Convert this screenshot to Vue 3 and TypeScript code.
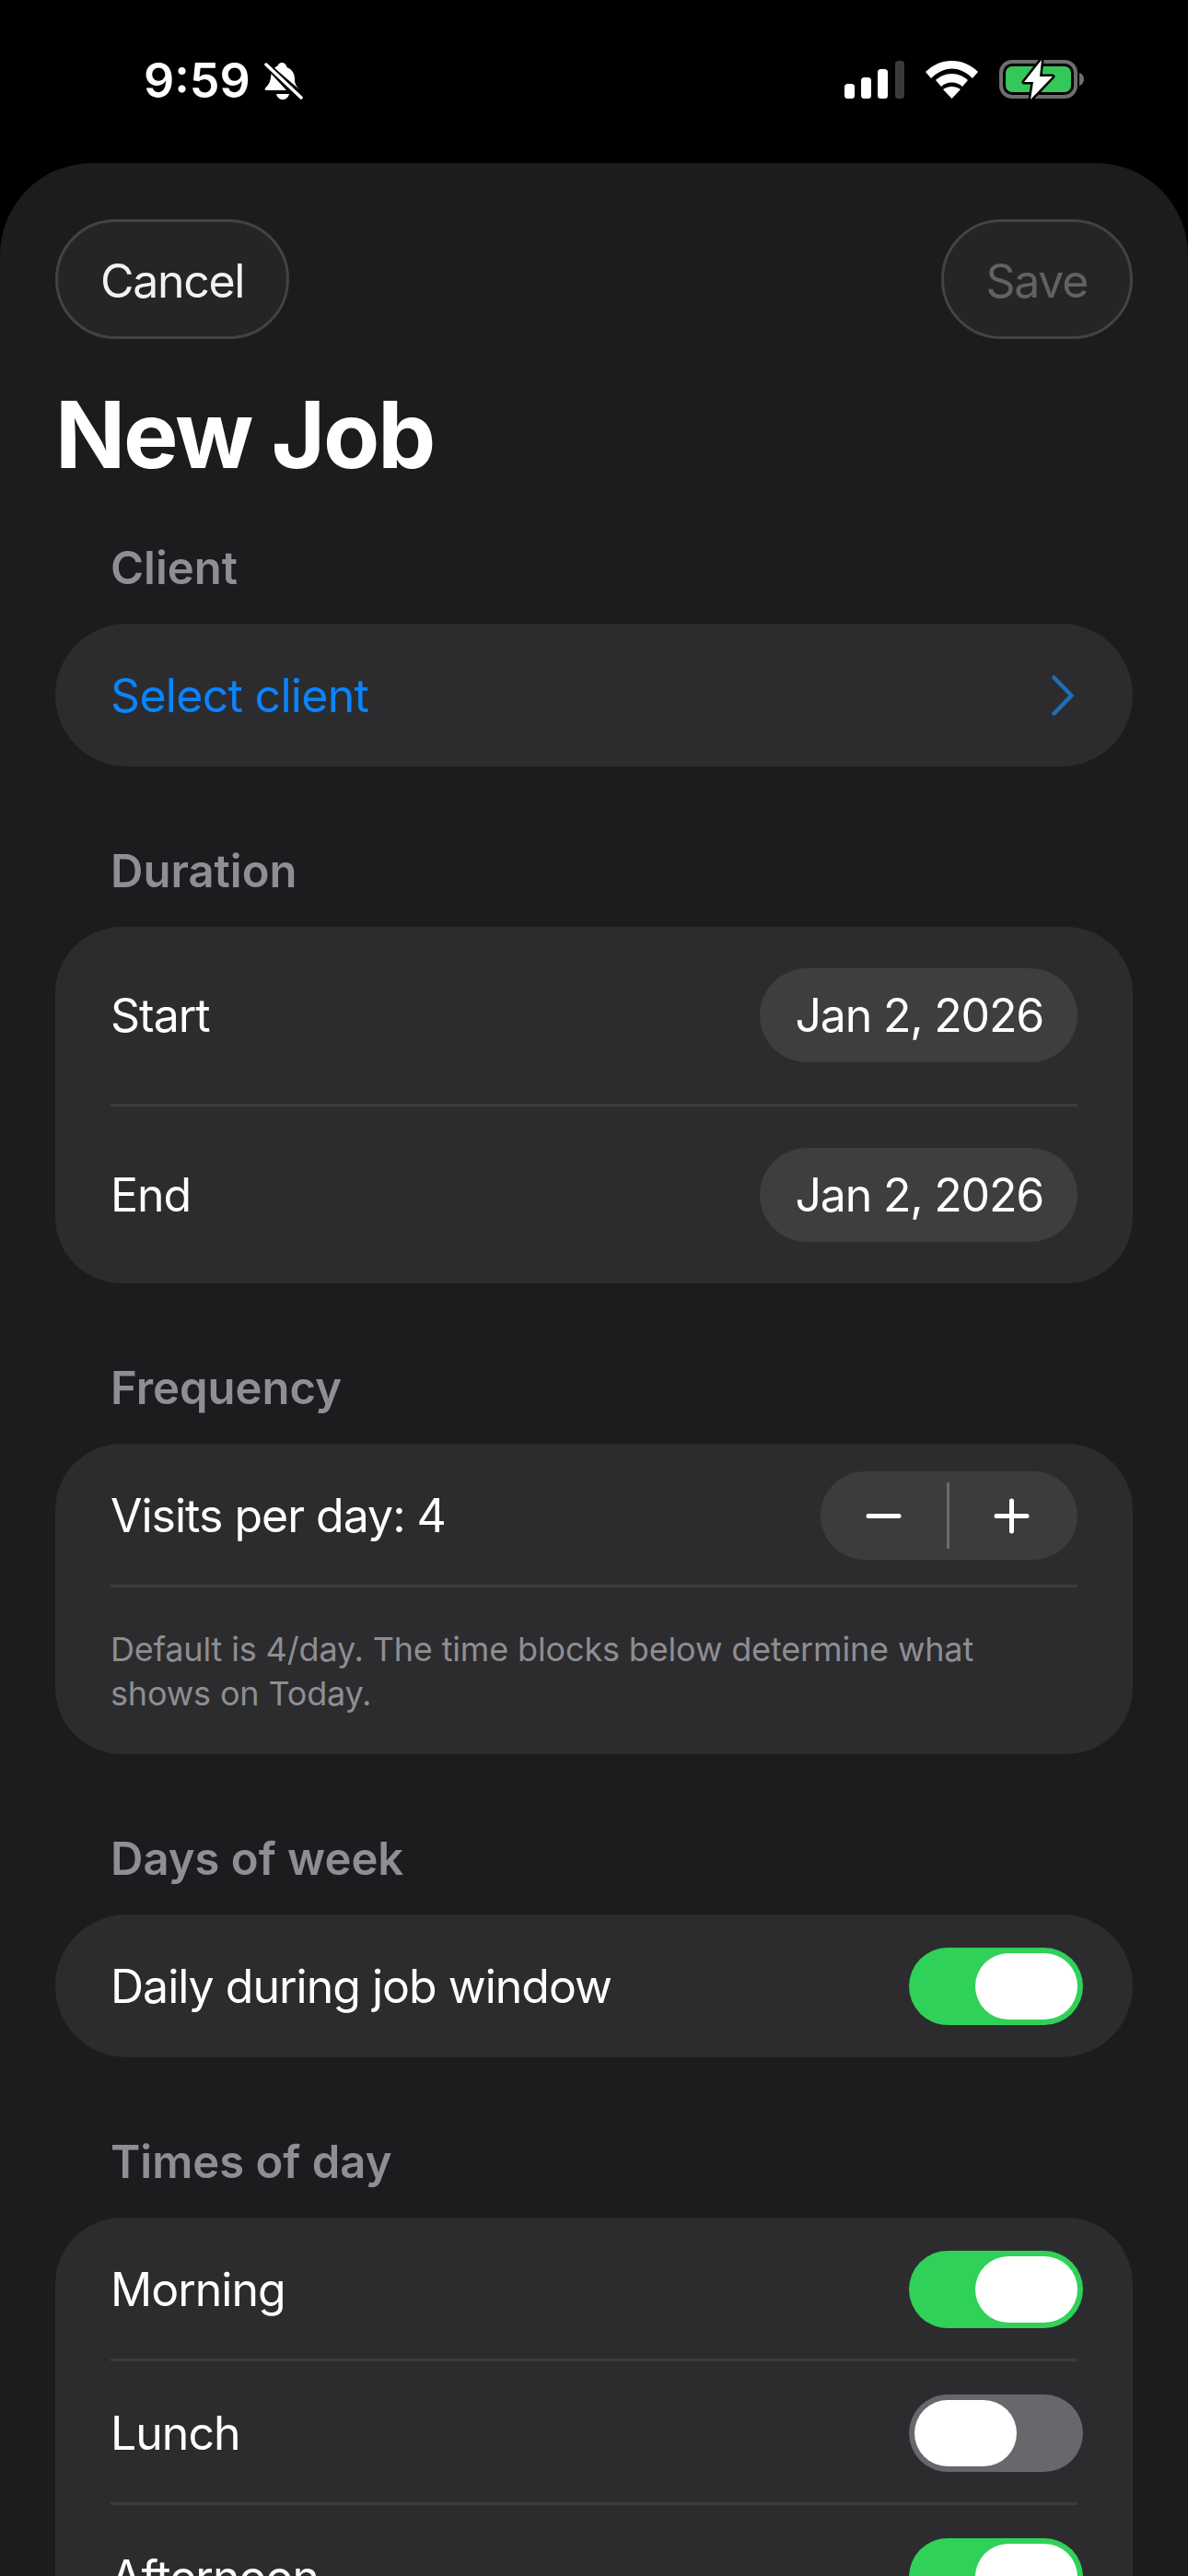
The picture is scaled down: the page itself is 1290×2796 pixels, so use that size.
<script setup lang="ts">
import { ref } from 'vue'

const visits = ref(4)
const daily = ref(true)

const times = ref([
  { name: 'Morning', on: true },
  { name: 'Lunch', on: false },
  { name: 'Afternoon', on: true }
])
</script>

<template>
  <div class="screen">
    <div class="status-bar">
      <div class="status-left">
        <span class="clock">9:59</span>
        <svg width="42" height="44" viewBox="0 0 42 44">
          <path fill="#fff" d="M19 2C22 2 24 4 24.500 7C30 9 33 14 33 20C33 24 34 27 38 31L11 8C13 6 13.500 6 14.500 5.500C15 3.500 17 2 19 2Z"/>
          <path fill="#fff" d="M7.500 14L24 32H2C.5 32 0 30 1.500 29C5 26 7 22 7.500 14Z"/>
          <path fill="#fff" d="M13 36H27C26 40 23 42 20 42S14 40 13 36Z"/>
          <path stroke="#000" stroke-width="7" d="M1 3L41 41"/>
          <path stroke="#fff" stroke-width="3.500" stroke-linecap="round" d="M2 4L40 40"/>
        </svg>
      </div>
      <div class="status-right">
        <svg width="65" height="44" viewBox="0 0 65 44">
          <rect x="0" y="27" width="11" height="16" rx="3.500" fill="#fff"/>
          <rect x="18" y="20" width="11" height="23" rx="3.500" fill="#fff"/>
          <rect x="36" y="11" width="11" height="32" rx="3.500" fill="#fff"/>
          <rect x="55" y="2" width="10" height="41" rx="3.500" fill="#3a3a3a"/>
        </svg>
        <svg width="57" height="44" viewBox="0 0 57 44">
          <path fill="#fff" d="M28.500 2C39.500 2 49.500 6.500 57 14L51 21C45 15 37 10.500 28.500 10.500S12 15 6 21L0 14C7.500 6.500 17.500 2 28.500 2Z"/>
          <path fill="#fff" d="M28.500 16C35.500 16 41.500 19 46 23L40 30C37 27 33 25.500 28.500 25.500S20 27 17 30L11 23C15.500 19 21.500 16 28.500 16Z"/>
          <path fill="#fff" d="M28.500 30C32 30 35 31 38 33L28.500 43L19 33C22 31 25 30 28.500 30Z"/>
        </svg>
        <svg width="92" height="44" viewBox="0 0 92 44">
          <rect x="2" y="3" width="81" height="38" rx="12" fill="none" stroke="#6e6e6e" stroke-width="4"/>
          <rect x="7" y="8" width="71" height="28" rx="7" fill="#34c759"/>
          <path fill="#6e6e6e" d="M87 15C90 16 92 18.500 92 22S90 28 87 29Z"/>
          <path fill="#fff" stroke="#000" stroke-width="5" paint-order="stroke" stroke-linejoin="round" d="M46 1L27 25H37L34 44L58 19H44Z"/>
        </svg>
      </div>
    </div>

    <div class="sheet">
      <div class="nav">
        <button class="glass-btn">Cancel</button>
        <button class="glass-btn disabled">Save</button>
      </div>
      <h1 class="title">New Job</h1>

      <div class="section-label first">Client</div>
      <div class="card pill-card">
        <div class="row select-row">
          <span class="link">Select client</span>
          <svg class="chevron" width="24" height="44" viewBox="0 0 24 44">
            <path d="M2.500 2.500L21.500 22L2.500 41.500" fill="none" stroke="#1c6fb5" stroke-width="4.500" stroke-linecap="round" stroke-linejoin="round"/>
          </svg>
        </div>
      </div>

      <div class="section-label">Duration</div>
      <div class="card">
        <div class="row date-row">
          <span>Start</span>
          <span class="date-pill">Jan 2, 2026</span>
        </div>
        <div class="divider"></div>
        <div class="row date-row">
          <span>End</span>
          <span class="date-pill">Jan 2, 2026</span>
        </div>
      </div>

      <div class="section-label">Frequency</div>
      <div class="card">
        <div class="row tall-row">
          <span>Visits per day: {{ visits }}</span>
          <div class="stepper">
            <button class="step-btn" @click="visits--">
              <svg width="39" height="39" viewBox="0 0 39 39"><path d="M3 19.500H36" stroke="#fff" stroke-width="5" stroke-linecap="round"/></svg>
            </button>
            <div class="step-sep"></div>
            <button class="step-btn plus" @click="visits++">
              <svg width="39" height="39" viewBox="0 0 39 39"><path d="M3 19.500H36M19.500 3V36" stroke="#fff" stroke-width="5" stroke-linecap="round"/></svg>
            </button>
          </div>
        </div>
        <div class="divider"></div>
        <p class="help">Default is 4/day. The time blocks below determine what shows on Today.</p>
      </div>

      <div class="section-label">Days of week</div>
      <div class="card pill-card">
        <div class="row select-row">
          <span>Daily during job window</span>
          <div class="toggle" :class="{ on: daily }" @click="daily = !daily"><div class="knob"></div></div>
        </div>
      </div>

      <div class="section-label">Times of day</div>
      <div class="card">
        <template v-for="(t, i) in times" :key="t.name">
          <div v-if="i > 0" class="divider"></div>
          <div class="row tall-row">
            <span>{{ t.name }}</span>
            <div class="toggle" :class="{ on: t.on }" @click="t.on = !t.on"><div class="knob"></div></div>
          </div>
        </template>
      </div>
    </div>
  </div>
</template>

<style>
html, body {
  margin: 0;
  background: #000;
}
</style>

<style scoped>
.screen {
  width: 1290px;
  height: 2796px;
  overflow: hidden;
  background: #000;
  font-family: Inter, "Liberation Sans", sans-serif;
  color: #fff;
}

.status-bar {
  height: 177px;
  box-sizing: border-box;
  padding: 64px 113px 0 156px;
  display: flex;
  justify-content: space-between;
  align-items: flex-start;
}

.status-left {
  display: flex;
  align-items: center;
  gap: 15px;
}

.clock {
  font-size: 52px;
  font-weight: 600;
  line-height: 48px;
}

.status-right {
  display: flex;
  align-items: center;
  gap: 23px;
}

.sheet {
  background: #1c1c1e;
  border-radius: 100px 100px 0 0;
  padding: 61px 60px 0;
  height: 2700px;
}

.nav {
  display: flex;
  justify-content: space-between;
}

.glass-btn {
  height: 130px;
  box-sizing: border-box;
  padding: 4px 46px 0;
  border-radius: 65px;
  background: #252527;
  border: 3px solid #434346;
  color: #f2f2f2;
  font-family: inherit;
  font-size: 50px;
  letter-spacing: -1.3px;
  font-weight: 400;
}

.glass-btn.disabled {
  color: #626264;
}

.title {
  margin: 44px 0 0;
  font-size: 100px;
  line-height: 120px;
  letter-spacing: -2.1px;
  font-weight: 700;
}

.section-label {
  margin: 80px 0 0 60px;
  height: 68px;
  font-size: 49px;
  line-height: 68px;
  font-weight: 600;
  color: #8e8e93;
}

.section-label.first {
  margin-top: 51px;
}

.card {
  margin-top: 26px;
  background: #2c2c2e;
  border-radius: 72px;
  padding: 0 60px;
  font-size: 50px;
  letter-spacing: -1px;
}

.pill-card {
  border-radius: 78px;
}

.row {
  display: flex;
  justify-content: space-between;
  align-items: center;
}

.select-row {
  height: 155px;
}

.link {
  color: #0a84ff;
  letter-spacing: -0.7px;
}

.chevron {
  margin-right: 4px;
}

.date-row {
  height: 192px;
}

.date-pill {
  background: #3e3e40;
  border-radius: 52px;
  height: 102px;
  line-height: 102px;
  padding: 0 37px 0 38px;
  letter-spacing: -1.2px;
}

.divider {
  height: 3px;
  background: #3c3c3e;
}

.tall-row {
  height: 153px;
  box-sizing: border-box;
  padding-top: 3px;
}

.stepper {
  display: flex;
  align-items: center;
  width: 279px;
  height: 96px;
  border-radius: 48px;
  background: #3c3c3e;
}

.step-btn {
  flex: 1;
  height: 100%;
  padding: 0;
  border: 0;
  background: none;
  display: flex;
  align-items: center;
  justify-content: center;
}

.step-btn.plus {
  padding-right: 3px;
}

.step-sep {
  width: 3px;
  height: 72px;
  background: #6a6a6c;
}

.help {
  margin: 0;
  padding: 43px 0 42px;
  font-size: 36px;
  line-height: 48px;
  letter-spacing: -0.15px;
  color: #8e8e93;
}

.toggle {
  width: 189px;
  height: 84px;
  box-sizing: border-box;
  padding: 6px;
  margin-right: -6px;
  border-radius: 42px;
  background: #67676c;
  display: flex;
  justify-content: flex-start;
}

.toggle.on {
  background: #30d158;
  justify-content: flex-end;
}

.knob {
  width: 111px;
  height: 72px;
  border-radius: 36px;
  background: #fff;
}
</style>
